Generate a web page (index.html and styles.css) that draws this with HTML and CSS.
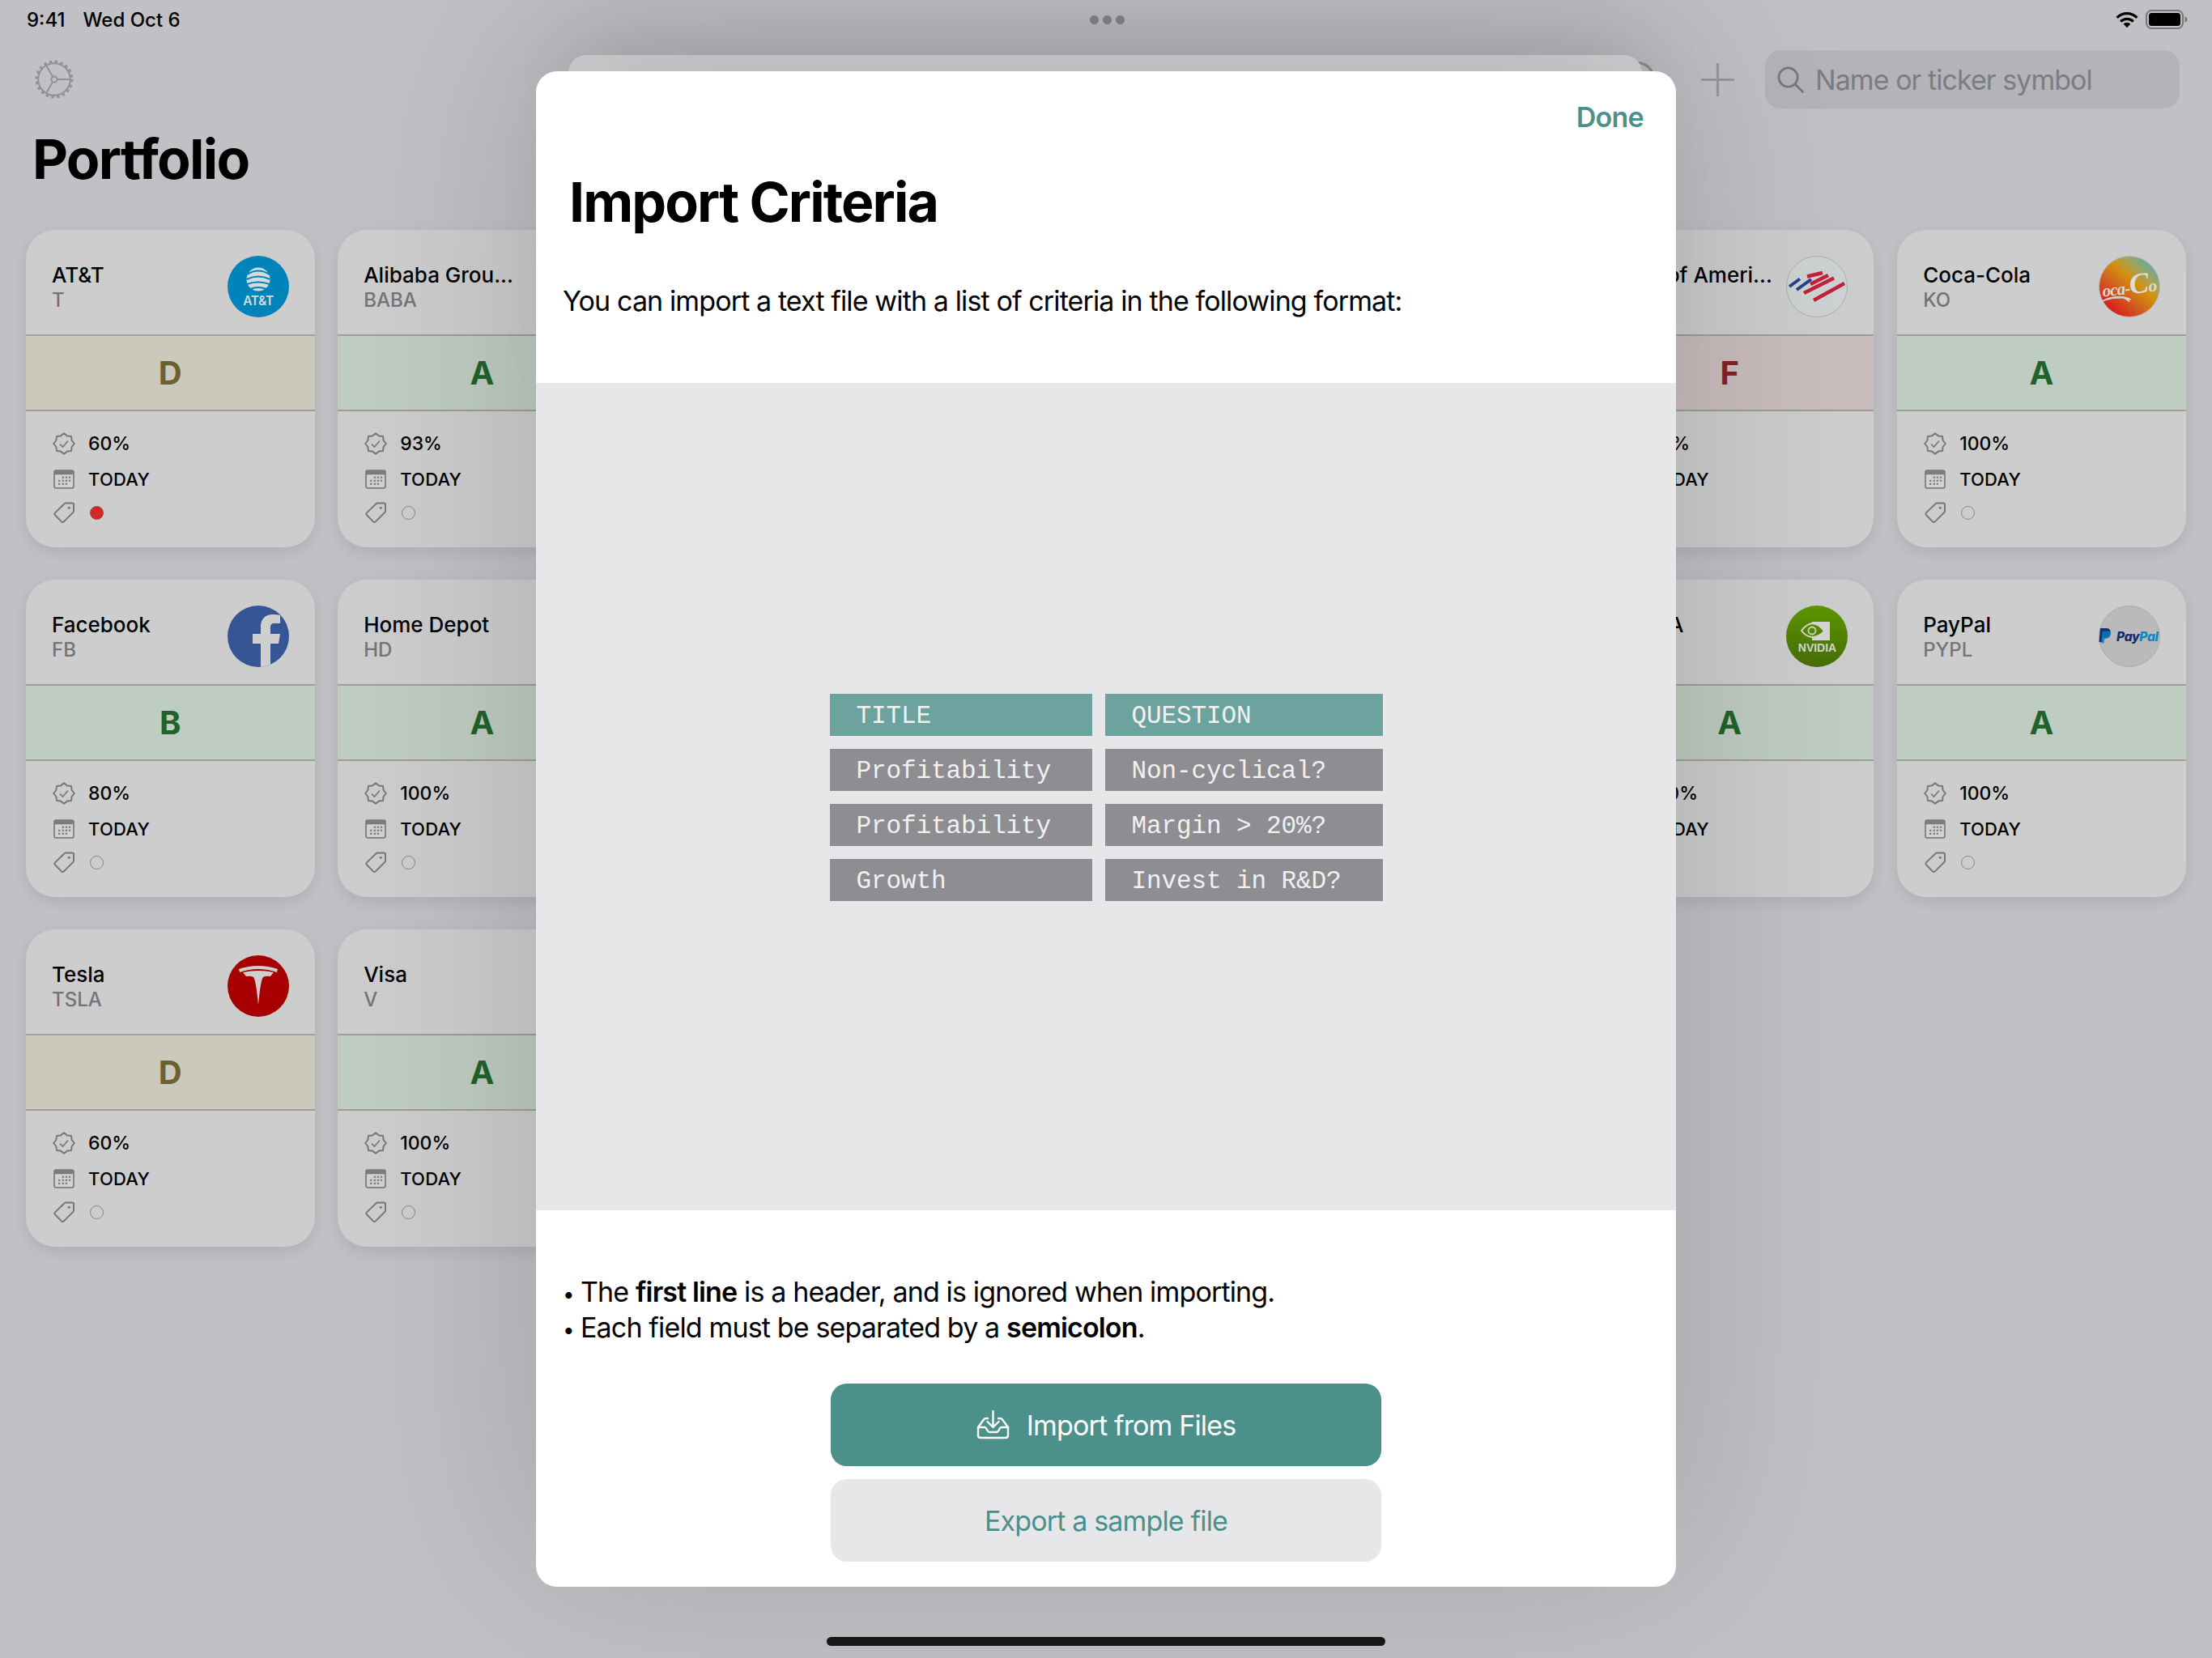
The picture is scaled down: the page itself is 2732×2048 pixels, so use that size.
FILE: index.html
```html
<!DOCTYPE html>
<html lang="en">
<head>
<meta charset="utf-8">
<title>Portfolio - Import Criteria</title>
<link rel="stylesheet" href="styles.css">
</head>
<body>
<svg class="defs" aria-hidden="true">
  <symbol id="i-badge" viewBox="0 0 28 28">
    <polygon points="14,1.2 18,4.4 23,5 23.6,10 26.8,14 23.6,18 23,23 18,23.6 14,26.8 10,23.6 5,23 4.4,18 1.2,14 4.4,10 5,5 10,4.4" fill="none" stroke="#77777b" stroke-width="2" stroke-linejoin="round"/>
    <path d="M9 14.5l3.5 3.6L19 10.5" fill="none" stroke="#77777b" stroke-width="1.6"/>
  </symbol>
  <symbol id="i-cal" viewBox="0 0 24 22">
    <rect x="1" y="1" width="22" height="20" rx="2.5" fill="#7c7c80"/>
    <rect x="2.5" y="6" width="19" height="13.5" rx="1" fill="#d2d2d2"/>
    <g fill="#808084">
      <rect x="10" y="8" width="2" height="2"/><rect x="13.5" y="8" width="2" height="2"/><rect x="17" y="8" width="2" height="2"/>
      <rect x="6" y="11.5" width="2" height="2"/><rect x="10" y="11.5" width="2" height="2"/><rect x="13.5" y="11.5" width="2" height="2"/><rect x="17" y="11.5" width="2" height="2"/>
      <rect x="6" y="15" width="2" height="2"/><rect x="10" y="15" width="2" height="2"/><rect x="13.5" y="15" width="2" height="2"/>
    </g>
  </symbol>
  <symbol id="i-tag" viewBox="0 0 28 28">
    <path d="M2.8 14.6L14.5 3.2Q15.3 2.5 16.3 2.5H24.2Q26 2.5 26 4.3V12.3Q26 13.4 25.2 14.1L13.6 25.6Q12.4 26.6 11.2 25.6L2.8 17Q1.7 15.8 2.8 14.6Z" fill="none" stroke="#77777b" stroke-width="2"/>
    <circle cx="20.3" cy="8.2" r="1.5" fill="#77777b"/>
  </symbol>
</svg>

<div class="screen">
  <header class="status">
    <div class="status-left"><span>9:41</span><span>Wed Oct 6</span></div>
    <div class="status-dots"><i></i><i></i><i></i></div>
    <div class="status-right">
      <svg class="wifi" viewBox="0 0 28 21"><path d="M1.6 7.8A17.5 17.5 0 0 1 26.4 7.8" fill="none" stroke="#000" stroke-width="3.2"/><path d="M6.2 12.6A11 11 0 0 1 21.8 12.6" fill="none" stroke="#000" stroke-width="3.2"/><path d="M9.6 15.6A6.2 6.2 0 0 1 18.4 15.6L14 20.2Z" fill="#000"/></svg>
      <svg class="battery" viewBox="0 0 52 24"><rect x="1" y="1" width="45" height="22" rx="6.5" fill="none" stroke="#77777b" stroke-width="2"/><rect x="4" y="4" width="39" height="16" rx="3.5" fill="#000"/><path d="M48.5 8.5c2 .4 3 1.8 3 3.5s-1 3.1-3 3.5z" fill="#77777b"/></svg>
    </div>
  </header>

  <nav class="toolbar">
    <svg class="gear" viewBox="0 0 48 48" fill="none" stroke="#929296">
      <circle cx="24" cy="24" r="21.8" stroke-width="3.4" stroke-dasharray="3.4 3.45"/>
      <circle cx="24" cy="24" r="19.8" stroke-width="2"/>
      <circle cx="24" cy="24" r="3.6" stroke-width="2"/>
      <path d="M27.6 24H43.8M22.2 20.9L14.1 6.8M22.2 27.1L14.1 41.2" stroke-width="2"/>
    </svg>
    <span class="ring"></span>
    <svg class="plus" viewBox="0 0 41 41"><path d="M20.5 0V41M0 20.5H41" stroke="#98989c" stroke-width="3.2"/></svg>
    <div class="search">
      <svg class="search-icon" viewBox="0 0 34 34" fill="none" stroke="#77777b" stroke-width="2.8"><circle cx="14" cy="14" r="12"/><path d="M23 23L32.5 32.5" stroke-linecap="round"/></svg>
      <span>Name or ticker symbol</span>
    </div>
  </nav>

  <h1 class="page-title">Portfolio</h1>

  <main class="grid">
    <article class="card">
      <div class="card-head">
        <div class="names"><div class="name">AT&amp;T</div><div class="ticker">T</div></div>
        <svg class="logo" viewBox="0 0 76 76"><circle cx="38" cy="38" r="38" fill="#0083ba"/><circle cx="38" cy="29" r="14.5" fill="#d3dcde"/><path d="M24 23Q38 14 52 23M23.5 29Q38 22 52.5 29M24 35Q38 30 52 35M28 41Q38 37 48 41" fill="none" stroke="#0083ba" stroke-width="2.2"/><text class="t-att" x="38" y="61" text-anchor="middle">AT&amp;T</text></svg>
      </div>
      <div class="band band-d">D</div>
      <div class="card-body">
        <div class="row"><svg class="ic"><use href="#i-badge"/></svg><span>60%</span></div>
        <div class="row"><svg class="ic"><use href="#i-cal"/></svg><span>TODAY</span></div>
        <div class="row row-tag"><svg class="ic"><use href="#i-tag"/></svg><i class="dot red"></i></div>
      </div>
    </article>

    <article class="card">
      <div class="card-head"><div class="names"><div class="name">Alibaba Grou...</div><div class="ticker">BABA</div></div></div>
      <div class="band band-a">A</div>
      <div class="card-body">
        <div class="row"><svg class="ic"><use href="#i-badge"/></svg><span>93%</span></div>
        <div class="row"><svg class="ic"><use href="#i-cal"/></svg><span>TODAY</span></div>
        <div class="row row-tag"><svg class="ic"><use href="#i-tag"/></svg><i class="dot"></i></div>
      </div>
    </article>

    <div class="slot"></div>

    <article class="card">
      <div class="card-head">
        <div class="names"><div class="name">Bank of Ameri...</div><div class="ticker">BAC</div></div>
        <svg class="logo" viewBox="0 0 76 76"><circle cx="38" cy="38" r="37.5" fill="#cfd2d2" stroke="#adadad"/><path d="M34 55L72 34M22 46L59 27.5M26 25.5L45 21M30 35L52 24" fill="none" stroke="#c4203a" stroke-width="4.6"/><path d="M4 38L17 28.5M13 42L31 29" fill="none" stroke="#24408a" stroke-width="4"/></svg>
      </div>
      <div class="band band-f">F</div>
      <div class="card-body">
        <div class="row"><svg class="ic"><use href="#i-badge"/></svg><span>80%</span></div>
        <div class="row"><svg class="ic"><use href="#i-cal"/></svg><span>TODAY</span></div>
        <div class="row row-tag"><svg class="ic"><use href="#i-tag"/></svg><i class="dot"></i></div>
      </div>
    </article>

    <article class="card">
      <div class="card-head">
        <div class="names"><div class="name">Coca-Cola</div><div class="ticker">KO</div></div>
        <svg class="logo" viewBox="0 0 76 76">
          <defs>
            <linearGradient id="coke" x1="0.15" y1="0.9" x2="0.85" y2="0.1"><stop offset="0" stop-color="#dc141c"/><stop offset=".35" stop-color="#d0601f"/><stop offset=".6" stop-color="#d4900c"/><stop offset=".8" stop-color="#a0a45c"/><stop offset="1" stop-color="#5faaa8"/></linearGradient>
          </defs>
          <circle cx="38" cy="38" r="37.5" fill="url(#coke)" stroke="#b5b5b5"/>
          <text class="t-coke" x="4" y="47" transform="rotate(-6 38 38)">oca-<tspan class="coke-big">C</tspan>o</text>
          <path d="M4 56Q18 51 30 52Q34 53 38 57Q36 53 40 54Q32 49 18 51Q10 52 4 56Z" fill="#d8d8d8" stroke="#d8d8d8"/>
        </svg>
      </div>
      <div class="band band-a">A</div>
      <div class="card-body">
        <div class="row"><svg class="ic"><use href="#i-badge"/></svg><span>100%</span></div>
        <div class="row"><svg class="ic"><use href="#i-cal"/></svg><span>TODAY</span></div>
        <div class="row row-tag"><svg class="ic"><use href="#i-tag"/></svg><i class="dot"></i></div>
      </div>
    </article>

    <article class="card">
      <div class="card-head">
        <div class="names"><div class="name">Facebook</div><div class="ticker">FB</div></div>
        <svg class="logo" viewBox="0 0 76 76"><defs><clipPath id="fb-clip"><circle cx="38" cy="38" r="38"/></clipPath></defs><circle cx="38" cy="38" r="38" fill="#365594"/><path clip-path="url(#fb-clip)" d="M41 76V47H31V35H41V26C41 16 47 11 56 11C60 11 64 11.5 65 12V22H58C54 22 53 24 53 27V35H65L63 47H53V76Z" fill="#cfcfcf"/></svg>
      </div>
      <div class="band band-a">B</div>
      <div class="card-body">
        <div class="row"><svg class="ic"><use href="#i-badge"/></svg><span>80%</span></div>
        <div class="row"><svg class="ic"><use href="#i-cal"/></svg><span>TODAY</span></div>
        <div class="row row-tag"><svg class="ic"><use href="#i-tag"/></svg><i class="dot"></i></div>
      </div>
    </article>

    <article class="card">
      <div class="card-head"><div class="names"><div class="name">Home Depot</div><div class="ticker">HD</div></div></div>
      <div class="band band-a">A</div>
      <div class="card-body">
        <div class="row"><svg class="ic"><use href="#i-badge"/></svg><span>100%</span></div>
        <div class="row"><svg class="ic"><use href="#i-cal"/></svg><span>TODAY</span></div>
        <div class="row row-tag"><svg class="ic"><use href="#i-tag"/></svg><i class="dot"></i></div>
      </div>
    </article>

    <div class="slot"></div>

    <article class="card">
      <div class="card-head">
        <div class="names"><div class="name">NVIDIA</div><div class="ticker">NVDA</div></div>
        <svg class="logo" viewBox="0 0 76 76">
          <defs><linearGradient id="nv" x1="0" y1="0" x2="0" y2="1"><stop offset="0" stop-color="#5f9700"/><stop offset="1" stop-color="#466d06"/></linearGradient></defs>
          <circle cx="38" cy="38" r="38" fill="url(#nv)"/>
          <path d="M32 20H54V43H32V39Q43 39 47 32Q41 23 32 22Z" fill="#d5d5d5"/>
          <path d="M19 31Q25 23 32 22Q42 23 47 32Q40 39 32 39Q24 38 19 31Z" fill="none" stroke="#d5d5d5" stroke-width="2"/>
          <circle cx="32" cy="31" r="4.5" fill="none" stroke="#d5d5d5" stroke-width="1.8"/>
          <text class="t-nv" x="38.5" y="56.5" text-anchor="middle">NVIDIA</text>
        </svg>
      </div>
      <div class="band band-a">A</div>
      <div class="card-body">
        <div class="row"><svg class="ic"><use href="#i-badge"/></svg><span>100%</span></div>
        <div class="row"><svg class="ic"><use href="#i-cal"/></svg><span>TODAY</span></div>
        <div class="row row-tag"><svg class="ic"><use href="#i-tag"/></svg><i class="dot"></i></div>
      </div>
    </article>

    <article class="card">
      <div class="card-head">
        <div class="names"><div class="name">PayPal</div><div class="ticker">PYPL</div></div>
        <svg class="logo" viewBox="0 0 76 76">
          <circle cx="38" cy="38" r="37.5" fill="#bababa" stroke="#acacac"/>
          <path d="M2 28H9C14 28 15 31 14.5 34C14 38 11 40 7 40H5.5L4.5 45H0.5Z" fill="#142c70"/>
          <path d="M4.5 31.5H11C15 31.5 15.5 34 15 36C14 40 11 41 8 41H7.5L6.5 46.5H3Z" fill="#0a7fc0" opacity=".8"/>
          <text class="t-pp" x="22" y="44"><tspan class="pp-a">Pay</tspan><tspan class="pp-b">Pal</tspan></text>
        </svg>
      </div>
      <div class="band band-a">A</div>
      <div class="card-body">
        <div class="row"><svg class="ic"><use href="#i-badge"/></svg><span>100%</span></div>
        <div class="row"><svg class="ic"><use href="#i-cal"/></svg><span>TODAY</span></div>
        <div class="row row-tag"><svg class="ic"><use href="#i-tag"/></svg><i class="dot"></i></div>
      </div>
    </article>

    <article class="card">
      <div class="card-head">
        <div class="names"><div class="name">Tesla</div><div class="ticker">TSLA</div></div>
        <svg class="logo" viewBox="0 0 76 76"><circle cx="38" cy="38" r="38" fill="#a80000"/><path d="M14 17Q38 9 62 17L61 21Q38 13 15 21Z" fill="#cfcfcf"/><path d="M19 21Q38 17 57 21L53 26Q47 25 44 27Q41 30 38 61Q35 30 32 27Q29 25 23 26Z" fill="#cfcfcf"/></svg>
      </div>
      <div class="band band-d">D</div>
      <div class="card-body">
        <div class="row"><svg class="ic"><use href="#i-badge"/></svg><span>60%</span></div>
        <div class="row"><svg class="ic"><use href="#i-cal"/></svg><span>TODAY</span></div>
        <div class="row row-tag"><svg class="ic"><use href="#i-tag"/></svg><i class="dot"></i></div>
      </div>
    </article>

    <article class="card">
      <div class="card-head"><div class="names"><div class="name">Visa</div><div class="ticker">V</div></div></div>
      <div class="band band-a">A</div>
      <div class="card-body">
        <div class="row"><svg class="ic"><use href="#i-badge"/></svg><span>100%</span></div>
        <div class="row"><svg class="ic"><use href="#i-cal"/></svg><span>TODAY</span></div>
        <div class="row row-tag"><svg class="ic"><use href="#i-tag"/></svg><i class="dot"></i></div>
      </div>
    </article>
  </main>

  <div class="sheet-back"></div>

  <section class="modal">
    <div class="modal-head">
      <div class="done-row"><a class="done">Done</a></div>
      <h2 class="modal-title">Import Criteria</h2>
      <p class="modal-intro">You can import a text file with a list of criteria in the following format:</p>
    </div>
    <div class="sample">
      <div class="sample-table">
        <div class="cell head">TITLE</div><div class="cell head">QUESTION</div>
        <div class="cell">Profitability</div><div class="cell">Non-cyclical?</div>
        <div class="cell">Profitability</div><div class="cell">Margin &gt; 20%?</div>
        <div class="cell">Growth</div><div class="cell">Invest in R&amp;D?</div>
      </div>
    </div>
    <ul class="notes">
      <li>The <b>first line</b> is a header, and is ignored when importing.</li>
      <li>Each field must be separated by a <b>semicolon</b>.</li>
    </ul>
    <div class="actions">
      <button class="btn btn-primary">
        <svg class="inbox" viewBox="0 0 41 36" fill="none" stroke="#fff" stroke-width="2.4" stroke-linejoin="round" stroke-linecap="round">
          <path d="M2 21V31Q2 34 5 34H36Q39 34 39 31V21"/>
          <path d="M2 21L9 11.5Q10 10 12 10H14M27 10H29Q31 10 32 11.5L39 21"/>
          <path d="M2 21H10Q11.5 21 12.5 23L13.5 25Q14.5 27 16.5 27H24.5Q26.5 27 27.5 25L28.5 23Q29.5 21 31 21H39"/>
          <path d="M20.5 1V21M13.5 14L20.5 21L27.5 14"/>
        </svg>
        <span>Import from Files</span>
      </button>
      <button class="btn btn-secondary">Export a sample file</button>
    </div>
  </section>

  <div class="home-bar"></div>
</div>
</body>
</html>
```
FILE: styles.css
```css
* { box-sizing: border-box; }
html, body { margin: 0; padding: 0; }
body { font-family: Inter, "Liberation Sans", sans-serif; color: #000; background: #c0c0c5; }
.defs { display: none; }

.screen { position: relative; width: 2732px; height: 2048px; overflow: hidden; background: #c0c0c5; }

.status { display: grid; grid-template-columns: 1fr auto 1fr; align-items: center; height: 46px; padding: 2px 30px 0 33px; font-size: 24px; font-weight: 500; }
.status-left { display: flex; gap: 22px; }
.status-dots { display: flex; gap: 5px; }
.status-dots i { width: 11px; height: 11px; border-radius: 50%; background: #87878b; }
.status-right { display: flex; justify-content: flex-end; align-items: center; gap: 9px; }
.wifi { width: 28px; height: 21px; }
.battery { width: 52px; height: 24px; }

.toolbar { display: flex; align-items: center; height: 72px; margin-top: 16px; padding: 0 40px 0 43px; }
.gear { width: 48px; height: 48px; }
.ring { width: 44px; height: 44px; margin-left: auto; border: 3px solid #8d8d91; border-radius: 50%; }
.plus { width: 41px; height: 41px; margin-left: 57px; }
.search { display: flex; align-items: center; gap: 14px; width: 512px; height: 72px; margin-left: 38.5px; padding-left: 15px; border-radius: 20px; background: #b3b3b8; color: #7d7d81; font-size: 34px; letter-spacing: -.95px; }
.search-icon { width: 33px; height: 33px; }

.page-title { margin: 21px 0 0; padding-left: 40px; font-size: 68px; line-height: 82px; font-weight: 700; letter-spacing: -1.7px; }

.grid { display: grid; grid-template-columns: repeat(7, 356.5px); grid-auto-rows: 392px; column-gap: 28.7px; row-gap: 40px; margin-top: 47px; padding-left: 32px; }
.slot { grid-column: span 3; }

.card { display: flex; flex-direction: column; border-radius: 36px; overflow: hidden; background: #cdcdcd; box-shadow: 0 6px 18px rgba(0, 0, 0, .09); }
.card-head { display: flex; justify-content: space-between; height: 129px; padding: 32px 32px 0 32px; }
.names { min-width: 0; padding-top: 7px; }
.name { font-size: 26px; line-height: 34px; font-weight: 500; white-space: nowrap; }
.ticker { font-size: 24px; line-height: 28px; font-weight: 500; color: #747478; }
.logo { flex: none; width: 76px; height: 76px; }
.t-att { font: 600 15.5px Inter, sans-serif; fill: #d3dcde; letter-spacing: -.5px; }
.t-coke { font: italic 700 21px "Liberation Serif", serif; fill: #dcdcdc; letter-spacing: -.8px; }
.coke-big { font-size: 36px; }
.t-nv { font: 700 14px "Liberation Sans", sans-serif; fill: #d5d5d5; }
.t-pp { font: italic 800 15.5px Inter, sans-serif; letter-spacing: -.3px; }
.pp-a { fill: #142c70; }
.pp-b { fill: #0a87c4; }

.band { display: flex; align-items: center; justify-content: center; height: 95px; border-top: 2px solid #98a098; border-bottom: 2px solid #98a098; font-size: 40px; font-weight: 700; }
.band-a { background: #bfccc1; color: #21632b; }
.band-d { background: #cbc9bb; color: #6e5f30; border-color: #a0a096; }
.band-f { background: #c9bdbd; color: #842226; border-color: #a09a9a; }

.card-body { padding: 18px 0 0 33px; }
.row { display: flex; align-items: center; gap: 16px; height: 44px; font-size: 23px; font-weight: 500; }
.row + .row + .row { height: 38px; }
.ic { flex: none; width: 28px; height: 28px; }
.row:nth-child(2) span { font-size: 22px; letter-spacing: .2px; }
.dot { width: 17px; height: 17px; margin-left: 2px; border: 1.5px solid #85858a; border-radius: 50%; }
.dot.red { background: #cf2a27; border-color: #b0403e; }

.sheet-back { position: absolute; left: 702px; top: 68px; width: 1326px; height: 400px; border-radius: 22px; background: #d4d4d7; box-shadow: 0 -10px 90px rgba(0, 0, 0, .1); }

.modal { position: absolute; left: 662px; top: 88px; display: flex; flex-direction: column; width: 1408px; height: 1872px; border-radius: 26px; overflow: hidden; background: #fff; letter-spacing: -.85px; box-shadow: 0 -40px 240px rgba(0, 0, 0, .17); }
.modal-head { height: 385px; padding: 37px 40px 0 33px; }
.done-row { display: flex; justify-content: flex-end; }
.done { font-size: 34px; line-height: 40px; font-weight: 600; color: #4b908a; letter-spacing: -.7px; }
.modal-title { margin: 43px 0 0 8px; font-size: 68px; line-height: 82px; font-weight: 700; letter-spacing: -1.9px; }
.modal-intro { margin: 60px 0 0; font-size: 34px; line-height: 44px; letter-spacing: -.88px; }

.sample { display: flex; align-items: center; justify-content: center; height: 1022px; padding-top: 2px; background: #e7e7e9; }
.sample-table { display: grid; grid-template-columns: 324px 343px; grid-auto-rows: 52px; gap: 16px; }
.cell { display: flex; align-items: center; padding: 2px 0 0 33px; background: #8e8d92; color: #f1f1f1; font-family: "Liberation Mono", monospace; font-size: 31px; letter-spacing: -.1px; }
.cell.head { background: #6ca39f; }

.notes { margin: 79px 0 0; padding: 0 0 0 33px; list-style: none; font-size: 34px; line-height: 44px; }
.notes li { padding-left: 22px; text-indent: -22px; }
.notes li::before { content: "•"; display: inline-block; width: 22px; text-indent: 0; font-size: 26px; line-height: 1; }
.notes b { font-weight: 600; }

.actions { display: flex; flex-direction: column; align-items: center; gap: 16px; margin-top: 47px; }
.btn { display: flex; align-items: center; justify-content: center; gap: 21px; width: 680px; height: 102px; border: 0; border-radius: 20px; font-family: inherit; font-size: 34px; letter-spacing: inherit; }
.btn-primary { padding-left: 6px; background: #4b908a; color: #fff; }
.btn-secondary { background: #e7e7e9; color: #4b908a; }
.inbox { width: 41px; height: 36px; }

.home-bar { position: absolute; left: 1021px; top: 2022px; width: 690px; height: 11px; border-radius: 6px; background: #171717; }
```
